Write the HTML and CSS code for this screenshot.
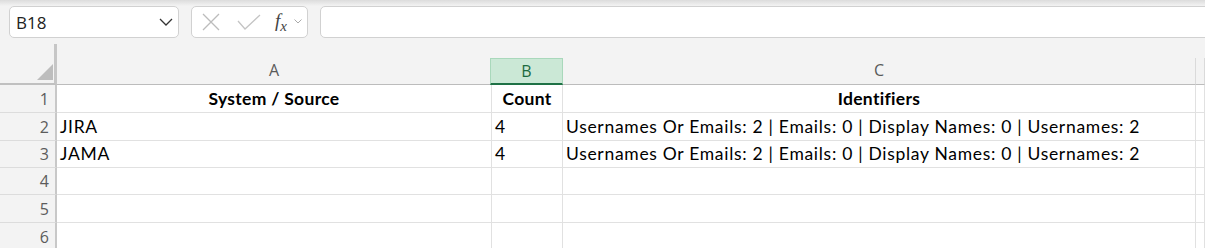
FILE: index.html
```html
<!DOCTYPE html>
<html lang="en">
<head>
  <meta charset="UTF-8">
  <title>Sheet1</title>
  <link rel="stylesheet" href="styles.css">
</head>
<body>

  <!-- formula bar -->
  <div class="formula-bar">
    <div class="name-box">
      <span>B18</span>
      <svg class="chev" width="14" height="8" viewBox="0 0 14 8"><polyline points="1,1 7,7 13,1" fill="none" stroke="#333" stroke-width="1.3"/></svg>
    </div>
    <div class="fx-box">
      <svg width="18" height="18" viewBox="0 0 18 18"><path d="M1 1 L17 17 M17 1 L1 17" stroke="#bcbcbc" stroke-width="1.3"/></svg>
      <svg width="24" height="17" viewBox="0 0 24 17"><polyline points="1,7 8,15 23,1" fill="none" stroke="#c4c4c4" stroke-width="1.3"/></svg>
      <span class="fx"><i>f</i><sub>x</sub></span>
      <svg width="8" height="5" viewBox="0 0 8 5"><polyline points="0.5,0.5 4,4 7.5,0.5" fill="none" stroke="#aaa" stroke-width="1"/></svg>
    </div>
    <div class="formula-input"></div>
  </div>

  <!-- grid -->
  <div class="sheet">
    <div class="corner"><span class="tri"></span></div>
    <div class="col-head">A</div>
    <div class="col-head sel">B</div>
    <div class="col-head">C</div>
    <div class="col-head"></div>

    <div class="row-head">1</div>
    <div class="cell b c">System / Source</div>
    <div class="cell b c">Count</div>
    <div class="cell b c">Identifiers</div>
    <div class="cell"></div>

    <div class="row-head">2</div>
    <div class="cell">JIRA</div>
    <div class="cell">4</div>
    <div class="cell">Usernames Or Emails: 2 | Emails: 0 | Display Names: 0 | Usernames: 2</div>
    <div class="cell"></div>

    <div class="row-head">3</div>
    <div class="cell">JAMA</div>
    <div class="cell">4</div>
    <div class="cell">Usernames Or Emails: 2 | Emails: 0 | Display Names: 0 | Usernames: 2</div>
    <div class="cell"></div>

    <div class="row-head">4</div>
    <div class="cell"></div><div class="cell"></div><div class="cell"></div><div class="cell"></div>

    <div class="row-head">5</div>
    <div class="cell"></div><div class="cell"></div><div class="cell"></div><div class="cell"></div>

    <div class="row-head">6</div>
    <div class="cell"></div><div class="cell"></div><div class="cell"></div><div class="cell"></div>
  </div>

</body>
</html>
```

FILE: styles.css
```css
body { margin: 0; background: #fff; overflow: hidden; }

.formula-bar { display: flex; height: 44px; padding-top: 6px; box-sizing: border-box; background: linear-gradient(#dcdcdc, #f3f3f3 6px); }
.name-box, .fx-box, .formula-input { height: 32px; box-sizing: border-box; background: #fff; border: 1px solid #d1d1d1; border-radius: 5px; }
.name-box { margin-left: 9px; width: 170px; display: flex; align-items: center; justify-content: space-between; padding: 0 4px 0 6px; font: 17px "Open Sans", sans-serif; color: #222; }
.name-box .chev { margin-right: 1px; }
.fx-box { margin-left: 12px; width: 117px; display: flex; align-items: center; padding: 0 0 0 10px; gap: 0; }
.fx-box svg:nth-child(2) { margin-left: 17px; }
.fx { margin-left: 14px; font: italic 19px "Liberation Serif", serif; color: #444; }
.fx sub { font-size: 15px; vertical-align: -4px; }
.fx-box svg:last-child { margin-left: 7px; margin-top: -2px; }
.formula-input { margin-left: 12px; flex: 1; margin-right: -10px; }

.sheet { display: grid; grid-template-columns: 57px 435px 71px 633px 1fr; grid-template-rows: 41px 28px 28px 27px 27px 28px 28px; background: #f3f3f3; }
.corner { border-right: 3px solid #c6c6c6; border-bottom: 2px solid #c0c0c0; position: relative; }
.tri { position: absolute; right: 1px; bottom: 3px; width: 0; height: 0; border-left: 16px solid transparent; border-bottom: 16px solid #bdbdbd; }
.col-head { align-self: end; height: 27px; box-sizing: border-box; border-right: 1px solid #dadada; border-bottom: 1px solid #bcbcbc; text-align: center; font: 16px "Open Sans", sans-serif; color: #5a5a5a; line-height: 24px; }
.col-head.sel { background: #cbe8d6; border: 1px solid #a9d8bb; border-bottom: 2px solid #1e7145; color: #1d6b40; margin-left: -2px; }
.row-head { background: #f3f3f3; border-right: 2px solid #c8c8c8; border-bottom: 1px solid #dcdcdc; text-align: right; padding-right: 6px; font: 16px "Open Sans", sans-serif; color: #5c5c5c; display: flex; align-items: flex-end; justify-content: flex-end; padding-bottom: 1px; line-height: 24px; }
.cell { background: #fff; border-right: 1px solid #e1e1e1; border-bottom: 1px solid #e1e1e1; display: flex; align-items: flex-end; padding: 0 0 3px 3px; font: 17.5px Lato, sans-serif; letter-spacing: 0.7px; color: #000; line-height: 20px; white-space: nowrap; }
.cell.b { font-weight: bold; letter-spacing: 0.3px; }
.cell.c { justify-content: center; padding-left: 0; }
```
